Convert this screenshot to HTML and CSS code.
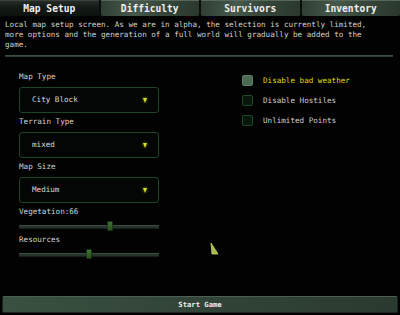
FILE: index.html
```html
<!DOCTYPE html>
<html>
<head>
<meta charset="utf-8">
<link rel="stylesheet" href="styles.css">
</head>
<body>
<div class="screen">
  <nav class="tabs">
    <div class="tab active">Map Setup</div>
    <div class="tab">Difficulty</div>
    <div class="tab">Survivors</div>
    <div class="tab">Inventory</div>
  </nav>
  <p class="desc">Local map setup screen. As we are in alpha, the selection is currently limited,<br>more options and the generation of a full world will gradually be added to the<br>game.</p>
  <div class="divider"></div>
  <div class="main">
    <div class="left">
      <div class="label">Map Type</div>
      <div class="select"><span>City Block</span><span class="arrow"></span></div>
      <div class="label">Terrain Type</div>
      <div class="select"><span>mixed</span><span class="arrow"></span></div>
      <div class="label">Map Size</div>
      <div class="select"><span>Medium</span><span class="arrow"></span></div>
      <div class="label">Vegetation:66</div>
      <div class="slider"><div class="track"></div><div class="thumb" style="left: 88px"></div></div>
      <div class="label">Resources</div>
      <div class="slider"><div class="track"></div><div class="thumb" style="left: 67px"></div></div>
    </div>
    <div class="right">
      <div class="check hover"><span class="box"></span><span class="ctext">Disable bad weather</span></div>
      <div class="check"><span class="box"></span><span class="ctext">Disable Hostiles</span></div>
      <div class="check"><span class="box"></span><span class="ctext">Unlimited Points</span></div>
    </div>
    <svg class="cursor" width="10" height="14" viewBox="0 0 10 14"><polygon points="1,1 8,12 2,12" fill="#a8b84a" stroke="#c8d868" stroke-width="0.8"/></svg>
  </div>
  <div class="start">Start Game</div>
</div>
</body>
</html>
```
FILE: styles.css
```css
* { box-sizing: border-box; }
html, body { margin: 0; padding: 0; background: #000; }
.screen {
  width: 400px;
  height: 315px;
  display: flex;
  flex-direction: column;
  background: #010201;
  font-family: "DejaVu Sans Mono", "Liberation Mono", monospace;
  color: #d2d2d2;
  font-size: 7.6px;
  line-height: 10px;
}
.tabs {
  display: flex;
  gap: 2px;
  height: 16px;
  background: #0b0f0c;
}
.tab {
  flex: 1;
  text-align: center;
  font-weight: bold;
  font-size: 9.6px;
  line-height: 15px;
  color: #f0f0f0;
  background: linear-gradient(100deg, #2f3d33 0%, #46594b 35%, #37473b 60%, #2a372e 100%);
  border-top: 1px solid #55685a;
  border-radius: 0 0 2px 2px;
}
.tab.active {
  background: linear-gradient(to bottom, #262c27 0%, #141a16 40%, #0e120f 100%);
  border-top: 1px solid #3a423c;
}
.desc {
  margin: 4px 0 0 5px;
  white-space: nowrap;
}
.divider {
  margin: 5px 7px 0 5px;
  height: 2px;
  background: #2d3d31;
  border-top: 1px solid #3a4d3f;
}
.main {
  flex: 1;
  position: relative;
  display: flex;
  padding: 15px 0 0 19px;
  gap: 83px;
}
.left {
  width: 140px;
  display: flex;
  flex-direction: column;
}
.label {
  height: 10px;
  margin-top: 4px;
}
.label:first-child { margin-top: 0; }
.select {
  margin-top: 5px;
  height: 26px;
  border: 1px solid #1b4526;
  border-radius: 3px;
  background: #030604;
  display: flex;
  align-items: center;
  justify-content: space-between;
  padding: 0 11px 0 12px;
  color: #dcdcdc;
}
.arrow {
  width: 0;
  height: 0;
  border-left: 2.5px solid transparent;
  border-right: 2.5px solid transparent;
  border-top: 5px solid #d4dc30;
  filter: drop-shadow(0 0 1.5px #8a981a);
}
.slider {
  position: relative;
  margin-top: 4px;
  height: 10px;
}
.track {
  position: absolute;
  left: 0;
  right: 0;
  top: 4px;
  height: 4px;
  background: #25322a;
  border-top: 1px solid #3c4d41;
  border-bottom: 1px solid #161f19;
}
.thumb {
  position: absolute;
  top: 0;
  width: 6px;
  height: 10px;
  background: linear-gradient(to bottom, #3f7430, #274f1f);
  border: 1px solid #1a3313;
  border-radius: 1px;
}
.right {
  display: flex;
  flex-direction: column;
  gap: 9px;
  padding-top: 3px;
}
.check {
  display: flex;
  align-items: center;
  gap: 10px;
  height: 11px;
  color: #cfcfcf;
}
.box {
  width: 11px;
  height: 11px;
  border-radius: 2px;
  background: #07170b;
  border: 1px solid #1f4a28;
}
.check.hover .box {
  background: #4c6b53;
  border-color: #5d7c64;
}
.check.hover .ctext { color: #dcdc1a; }
.cursor {
  position: absolute;
  left: 210px;
  top: 185px;
}
.start {
  margin: 0 2px 2px 2px;
  height: 17px;
  border: 1px solid #1b241e;
  border-radius: 2px;
  background: linear-gradient(100deg, #3a5040 0%, #33463a 40%, #2b3a30 100%);
  border-top-color: #4b6052;
  text-align: center;
  font-size: 7.2px;
  font-weight: bold;
  line-height: 15px;
  color: #ececec;
}
```
